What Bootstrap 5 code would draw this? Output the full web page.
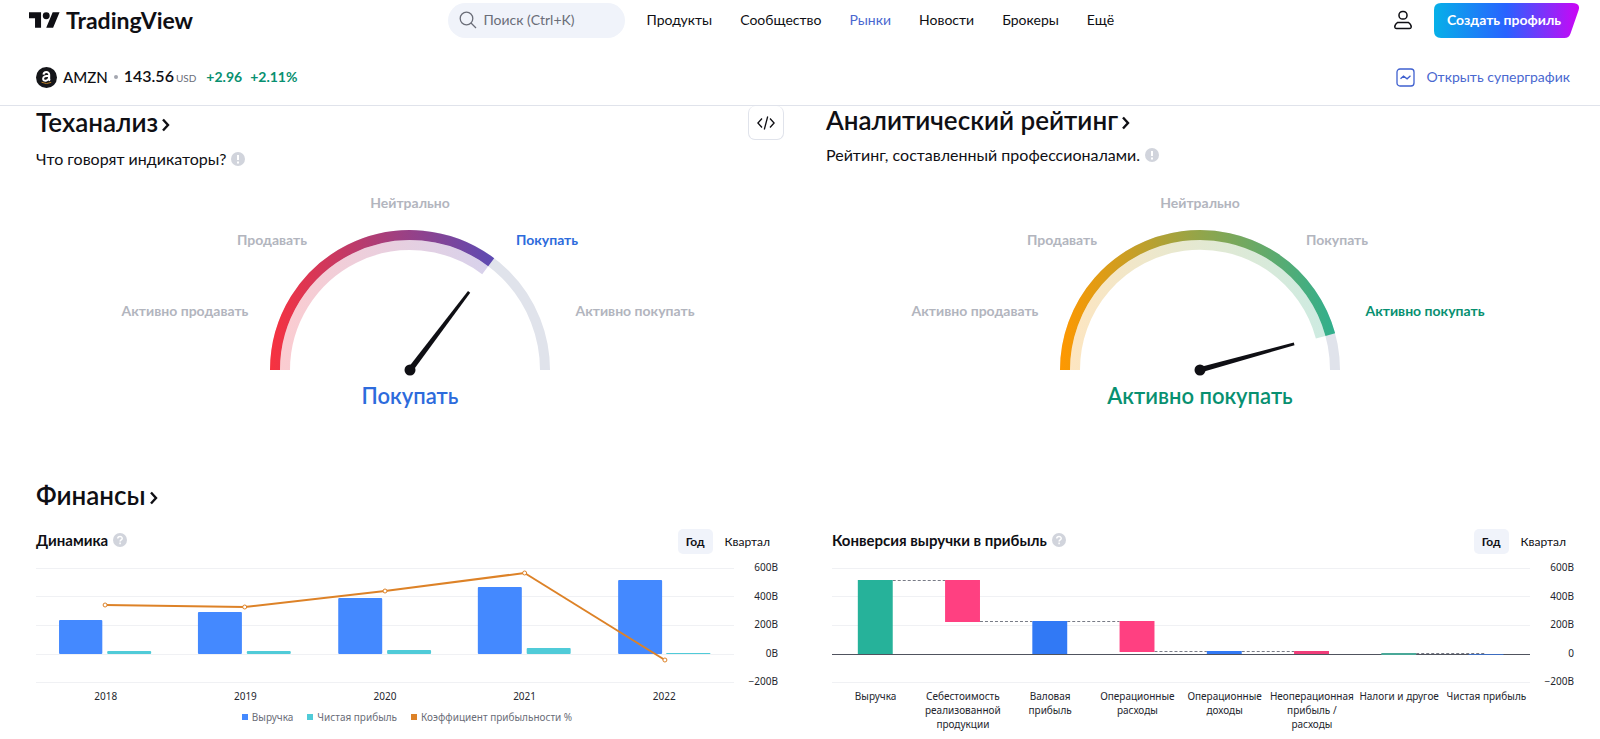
<!DOCTYPE html>
<html lang="ru">
<head>
<meta charset="utf-8">
<meta name="viewport" content="width=device-width, initial-scale=1">
<title>AMZN — TradingView</title>
<link href="https://cdn.jsdelivr.net/npm/bootstrap@5.3.0/dist/css/bootstrap.min.css" rel="stylesheet">
<style>
  :root { --ink: #0f0f14; --muted: #b2b5be; --blue: #2d6bdc; --green: #089070; --pale: #f0f3fa; --link: #4a68d0; }
  body { font-family: "Trebuchet MS", Lato, sans-serif; font-size: 14px; line-height: 20px; color: var(--ink); background: #fff; }
  .page-top { border-bottom: 1px solid #e0e3eb; }
  .bar-main { height: 40px; padding: 0 21px 0 29px; }
  .brand { width: 27%; min-width: 190px; }
  .brand a { gap: 6px; font-size: 23px; font-weight: 700; line-height: 28px; color: var(--ink); }
  .search-box { width: 177px; height: 35px; padding: 0 10px 0 11px; gap: 7px; border-radius: 18px; background: var(--pale); color: #6a6d78; }
  .search-box input { font-size: 14px; color: inherit; outline: 0; min-width: 0; }
  .search-box input::placeholder { color: #6a6d78; opacity: 1; }
  .main-links { gap: 28px; margin-left: 22px; }
  .main-links a { color: var(--ink); }
  .main-links a.active { color: var(--link); }
  .btn-user { width: 20px; height: 20px; margin-right: 21px; }
  .btn-create { width: 145px; height: 35px; padding: 0 18px 0 13px; font-size: 14px; font-weight: 700; line-height: 20px; color: #fff !important; white-space: nowrap; border: 0; }
  .bar-symbol { height: 56px; margin-top: 9px; padding: 0 30px 0 36px; }
  .ticker { gap: 6px; }
  .symbol-name { font-size: 15px; font-weight: 500; }
  .price { font-size: 16px; font-weight: 600; }
  .price-unit { font-size: 10px; font-weight: 400; color: #6a6d78; margin-left: 2px; }
  .delta { font-weight: 700; color: var(--green); gap: 8px; }
  .super-link { color: var(--link); gap: 11px; }
  .content { padding: 0 26px 0 36px; }
  .ratings { display: grid; grid-template-columns: 1fr 1fr; column-gap: 42px; }
  .finance { display: grid; grid-template-columns: 1fr 1fr; column-gap: 54px; }
  .title { font-size: 26px; font-weight: 600; line-height: 32px; margin: 0; }
  .title a { color: inherit; gap: 4px; }
  .title svg { margin-top: 6px; }
  .raised .title { line-height: 28px; }
  .about { font-size: 16px; line-height: 22px; gap: 5px; margin: 8px 0 15px; }
  .raised .about { margin-top: 10px; }
  .btn-embed { width: 36px; height: 34px; border: 1px solid #e0e3eb; border-top: 0; border-radius: 7px; background: #fff; }
  .gauge { height: 230px; }
  .gauge text { font-size: 14px; font-weight: 700; fill: var(--muted); text-anchor: middle; }
  .gauge text.verdict { font-size: 22px; font-weight: 600; }
  .gauge text.buy { fill: var(--blue); }
  .gauge text.strong-buy { fill: var(--green); }
  .finance-head { margin-top: 64px; }
  .chart-head { height: 25px; margin-top: 18px; }
  .chart-title { font-size: 15px; font-weight: 700; line-height: 20px; gap: 5px; margin: 0 0 3px; }
  .period .btn { font-size: 12px; line-height: 15px; padding: 5px 8px; border: 0; border-radius: 5px; color: var(--ink); }
  .period .btn.active { background: var(--pale); font-weight: 700; color: var(--ink); }
  .chart-part { font-family: "Noto Sans", sans-serif; font-size: 10px; line-height: 14px; color: #24262e; }
  .plot { height: 128px; margin-top: 6px; }
  .plot svg { min-width: 0; }
  .axis-y { width: 44px; text-align: right; }
  .axis-x { margin: 1px 44px 0 0; display: grid; grid-auto-flow: column; grid-auto-columns: minmax(0, 1fr); text-align: center; white-space: nowrap; }
  .legend { gap: 14px; margin-top: 7px; color: #6a6d78; }
  .legend span { gap: 4px; }
  .legend i { width: 6px; height: 6px; }
  .key-revenue { background: #4489ff; }
  .key-income { background: #50cbd8; }
  .key-margin { background: #dd8227; }
  .grid-lines line { stroke: #f0f1f4; }
  .margin-line line { stroke: #dd8227; stroke-width: 2; }
  .margin-line circle { fill: #fff; stroke: #dd8227; stroke-width: 1; }
  .links line { stroke: #787b86; stroke-dasharray: 3 2; }
</style>
</head>
<body>

<svg width="0" height="0" class="position-absolute" aria-hidden="true">
  <symbol id="chevron" viewBox="0 0 8 14"><path d="M1 1.500 6 7l-5 5.500" fill="none" stroke="#0f0f14" stroke-width="2.400"/></symbol>
  <symbol id="alert" viewBox="0 0 14 14"><circle cx="7" cy="7" r="7" fill="#d1d4dc"/><path d="M7 3v5M7 9.500v2" stroke="#fff" stroke-width="2"/></symbol>
  <symbol id="help" viewBox="0 0 14 14"><circle cx="7" cy="7" r="7" fill="#d1d4dc"/><path d="M4.800 5.500C4.800 2.800 9.300 2.900 9.200 5.400 9.200 6.900 7.100 6.800 7.100 8.500M7.100 9.600v1.700" fill="none" stroke="#fff" stroke-width="1.500"/></symbol>
</svg>

<header class="page-top">
  <nav class="bar-main d-flex align-items-center" aria-label="Главное меню">
    <div class="brand flex-shrink-0"><a href="#" class="d-inline-flex align-items-center text-decoration-none">
      <svg width="31" height="16" viewBox="0 4 36 18" fill="#0f0f14" aria-hidden="true"><path d="M14 22H7V11H0V4h14zM28 22h-8l7.500-18h8z"/><circle cx="20" cy="8" r="4"/></svg>
      TradingView</a></div>
    <label class="search-box d-flex align-items-center flex-shrink-0">
      <svg width="18" height="18" viewBox="0 0 18 18" fill="none" stroke="#6a6d78" stroke-width="1.300" class="flex-shrink-0" aria-hidden="true"><circle cx="7.500" cy="7.500" r="6.300"/><path d="m12 12 5 5"/></svg>
      <input type="search" class="border-0 bg-transparent p-0 w-100" placeholder="Поиск (Ctrl+K)" aria-label="Поиск">
    </label>
    <div class="main-links d-flex">
      <a href="#" class="text-decoration-none">Продукты</a>
      <a href="#" class="text-decoration-none">Сообщество</a>
      <a href="#" class="text-decoration-none active">Рынки</a>
      <a href="#" class="text-decoration-none">Новости</a>
      <a href="#" class="text-decoration-none">Брокеры</a>
      <a href="#" class="text-decoration-none">Ещё</a>
    </div>
    <button type="button" class="btn btn-user border-0 p-0 ms-auto d-flex" aria-label="Профиль">
      <svg width="20" height="20" viewBox="0 0 20 20" fill="none" stroke="#0f0f14" stroke-width="1.500"><rect x="6" y="1.500" width="8" height="7.500" rx="3.600"/><path d="M4.500 12.500h11c1.800 1.400 3 3 2.700 4.700-.2.900-.7 1.300-1.700 1.300h-13c-1 0-1.500-.4-1.700-1.300-.3-1.700.9-3.300 2.700-4.700z"/></svg>
    </button>
    <button type="button" class="btn btn-create position-relative">
      <svg class="position-absolute top-0 start-0" width="145" height="35" viewBox="0 0 145 35" aria-hidden="true">
        <defs><linearGradient id="cta"><stop stop-color="#06b0e8"/><stop offset=".5" stop-color="#2962ff"/><stop offset="1" stop-color="#cc05f5"/></linearGradient></defs>
        <path d="M7 0h131q9 0 6.500 7.500l-8 23q-1.500 4.500-6 4.500H7q-7 0-7-7V7q0-7 7-7z" fill="url(#cta)"/></svg>
      <span class="position-relative">Создать профиль</span>
    </button>
  </nav>
  <div class="bar-symbol d-flex align-items-center justify-content-between">
    <div class="ticker d-flex align-items-center">
      <svg width="21" height="21" viewBox="0 0 21 21" aria-hidden="true"><circle cx="10.500" cy="10.500" r="10.500" fill="#15161a"/><path d="M7.500 7.600c.2-3.300 5.700-3.500 5.700.1v4.200q0 1 .9 1.600M13 8.800c-3.200 0-5.900.4-5.900 2.900 0 3.100 5.500 2.400 5.900-1" fill="none" stroke="#fff" stroke-width="2"/><path d="M5.500 15.200q5 2.600 9.700.2" fill="none" stroke="#b57a24" stroke-width="1"/></svg>
      <span class="symbol-name">AMZN</span>
      <svg width="4" height="4" aria-hidden="true"><circle cx="2" cy="2" r="2" fill="#a3a6af"/></svg>
      <span class="price">143.56<span class="price-unit">USD</span></span>
      <span class="delta d-flex ms-1"><span>+2.96</span><span>+2.11%</span></span>
    </div>
    <a href="#" class="super-link d-flex align-items-center text-decoration-none">
      <svg width="19" height="19" viewBox="0 0 19 19" fill="none" stroke="#3f60cf" stroke-width="1.300" aria-hidden="true"><rect x="1" y="1" width="17" height="17" rx="3"/><path d="m4.500 10.800 3-2.600 3.600 2.600 3.400-3"/></svg>
      Открыть суперграфик</a>
  </div>
</header>

<main class="content">
  <section class="ratings">
    <div class="d-flex flex-column">
      <div class="d-flex justify-content-between align-items-start">
        <h2 class="title"><a href="#" class="d-flex align-items-center text-decoration-none">Теханализ<svg width="8" height="14"><use href="#chevron"/></svg></a></h2>
        <button type="button" class="btn-embed d-flex align-items-center justify-content-center p-0" aria-label="Код для вставки">
          <svg width="18" height="14" viewBox="0 0 18 14" fill="none" stroke="#0f0f14" stroke-width="1.300"><path d="M5 2.500.9 7 5 11.500M13 2.500 17.100 7 13 11.500M10.700.5 7.300 13.500"/></svg>
        </button>
      </div>
      <p class="about d-flex align-items-center">Что говорят индикаторы?<svg width="14" height="14"><use href="#alert"/></svg></p>
      <svg class="gauge w-100 mt-auto" viewBox="0 0 748 230" role="img" aria-label="Теханализ: Покупать">
        <defs><linearGradient id="g1" gradientUnits="userSpaceOnUse" x1="234" y1="0" x2="514" y2="0"><stop stop-color="#f7323f"/><stop offset="1" stop-color="#3650d0"/></linearGradient></defs>
        <g fill="none" stroke-width="10">
          <path d="M239 185a135 135 0 0 1 270 0" stroke="#e0e3eb"/>
          <path d="M249 185A125 125 0 0 1 449.200 85.200" stroke="#fff"/>
          <path d="M249 185A125 125 0 0 1 449.200 85.200" stroke="url(#g1)" opacity=".25"/>
          <path d="M239 185A135 135 0 0 1 455.200 77.200" stroke="url(#g1)"/>
        </g>
        <path d="m371.800 183.300 60.200-77.300 2.200 1.700-58 79z" fill="#0f0f14"/><circle cx="374" cy="185" r="5.500" fill="#0f0f14"/>
        <text x="374" y="23">Нейтрально</text>
        <text x="236" y="60">Продавать</text>
        <text x="511" y="60" class="buy">Покупать</text>
        <text x="149" y="131">Активно продавать</text>
        <text x="599" y="131">Активно покупать</text>
        <text x="374" y="219" class="verdict buy">Покупать</text>
      </svg>
    </div>
    <div class="d-flex flex-column raised">
      <h2 class="title"><a href="#" class="d-flex align-items-center text-decoration-none">Аналитический рейтинг<svg width="8" height="14"><use href="#chevron"/></svg></a></h2>
      <p class="about d-flex align-items-center">Рейтинг, составленный профессионалами.<svg width="14" height="14"><use href="#alert"/></svg></p>
      <svg class="gauge w-100 mt-auto" viewBox="0 0 748 230" role="img" aria-label="Аналитический рейтинг: Активно покупать">
        <defs><linearGradient id="g2" gradientUnits="userSpaceOnUse" x1="234" y1="0" x2="514" y2="0"><stop stop-color="#ff9800"/><stop offset=".5" stop-color="#92a54a"/><stop offset="1" stop-color="#2db090"/></linearGradient></defs>
        <g fill="none" stroke-width="10">
          <path d="M239 185a135 135 0 0 1 270 0" stroke="#e0e3eb"/>
          <path d="M249 185A125 125 0 0 1 494.700 152.200" stroke="#fff"/>
          <path d="M249 185A125 125 0 0 1 494.700 152.200" stroke="url(#g2)" opacity=".25"/>
          <path d="M239 185A135 135 0 0 1 504.300 149.600" stroke="url(#g2)"/>
        </g>
        <path d="m373.300 182.300 94.500-24.700.7 2.600-93.800 27.400z" fill="#0f0f14"/><circle cx="374" cy="185" r="5.500" fill="#0f0f14"/>
        <text x="374" y="23">Нейтрально</text>
        <text x="236" y="60">Продавать</text>
        <text x="511" y="60">Покупать</text>
        <text x="149" y="131">Активно продавать</text>
        <text x="599" y="131" class="strong-buy">Активно покупать</text>
        <text x="374" y="219" class="verdict strong-buy">Активно покупать</text>
      </svg>
    </div>
  </section>

  <section>
    <h2 class="title finance-head d-flex"><a href="#" class="d-flex align-items-center text-decoration-none">Финансы<svg width="8" height="14"><use href="#chevron"/></svg></a></h2>
    <div class="finance">
      <div>
        <div class="chart-head d-flex align-items-center justify-content-between">
          <h3 class="chart-title d-flex align-items-center">Динамика<svg width="14" height="14"><use href="#help"/></svg></h3>
          <div class="period d-flex gap-1"><button type="button" class="btn active">Год</button><button type="button" class="btn">Квартал</button></div>
        </div>
        <div class="chart-part">
          <div class="plot d-flex">
            <svg class="flex-grow-1 h-100" role="img" aria-label="Динамика по годам">
              <g class="grid-lines"><line x2="100%" y1="8.500" y2="8.500"/><line x2="100%" y1="36.500" y2="36.500"/><line x2="100%" y1="65.500" y2="65.500"/><line x2="100%" y1="94.500" y2="94.500"/><line x2="100%" y1="122.500" y2="122.500"/></g>
              <g fill="#4489ff">
                <rect x="3.300%" y="60" width="6.200%" height="34" rx="1"/><rect x="23.200%" y="52" width="6.300%" height="42" rx="1"/><rect x="43.300%" y="38" width="6.300%" height="56" rx="1"/><rect x="63.300%" y="27" width="6.300%" height="67" rx="1"/><rect x="83.400%" y="20" width="6.300%" height="74" rx="1"/>
              </g>
              <g fill="#50cbd8">
                <rect x="10.200%" y="91" width="6.300%" height="3" rx="1"/><rect x="30.200%" y="91" width="6.300%" height="3" rx="1"/><rect x="50.300%" y="90" width="6.300%" height="4" rx="1"/><rect x="70.300%" y="88" width="6.300%" height="6" rx="1"/><rect x="90.300%" y="93" width="6.300%" height="1"/>
              </g>
              <g class="margin-line">
                <line x1="9.900%" y1="45" x2="29.900%" y2="47"/><line x1="29.900%" y1="47" x2="50%" y2="31"/><line x1="50%" y1="31" x2="70%" y2="13"/><line x1="70%" y1="13" x2="90.100%" y2="100"/>
                <circle cx="9.900%" cy="45" r="2"/><circle cx="29.900%" cy="47" r="2"/><circle cx="50%" cy="31" r="2"/><circle cx="70%" cy="13" r="2"/><circle cx="90.100%" cy="100" r="2"/>
              </g>
            </svg>
            <div class="axis-y d-flex flex-column justify-content-between flex-shrink-0"><span>600B</span><span>400B</span><span>200B</span><span>0B</span><span>−200B</span></div>
          </div>
          <div class="axis-x"><span>2018</span><span>2019</span><span>2020</span><span>2021</span><span>2022</span></div>
          <div class="legend d-flex justify-content-center">
            <span class="d-flex align-items-center"><i class="key-revenue"></i>Выручка</span>
            <span class="d-flex align-items-center"><i class="key-income"></i>Чистая прибыль</span>
            <span class="d-flex align-items-center"><i class="key-margin"></i>Коэффициент прибыльности %</span>
          </div>
        </div>
      </div>
      <div>
        <div class="chart-head d-flex align-items-center justify-content-between">
          <h3 class="chart-title d-flex align-items-center">Конверсия выручки в прибыль<svg width="14" height="14"><use href="#help"/></svg></h3>
          <div class="period d-flex gap-1"><button type="button" class="btn active">Год</button><button type="button" class="btn">Квартал</button></div>
        </div>
        <div class="chart-part">
          <div class="plot d-flex">
            <svg class="flex-grow-1 h-100" role="img" aria-label="Конверсия выручки в прибыль">
              <g class="grid-lines"><line x2="100%" y1="8.500" y2="8.500"/><line x2="100%" y1="36.500" y2="36.500"/><line x2="100%" y1="65.500" y2="65.500"/><line x2="100%" y1="122.500" y2="122.500"/></g>
              <line x2="100%" y1="94.500" y2="94.500" stroke="#50535e"/>
              <g class="links"><line x1="8.700%" x2="16.200%" y1="20.500" y2="20.500"/><line x1="21.200%" x2="28.700%" y1="61.500" y2="61.500"/><line x1="33.700%" x2="41.200%" y1="61.500" y2="61.500"/><line x1="46.200%" x2="53.700%" y1="91.500" y2="91.500"/><line x1="58.700%" x2="66.200%" y1="91.500" y2="91.500"/><line x1="83.700%" x2="93.600%" y1="93.500" y2="93.500"/></g>
              <rect x="3.700%" y="20" width="5%" height="74" fill="#26b29a"/>
              <rect x="16.200%" y="20" width="5%" height="42" fill="#ff4081"/>
              <rect x="28.700%" y="61" width="5%" height="33" fill="#3179f5"/>
              <rect x="41.200%" y="61" width="5%" height="31" fill="#ff4081"/>
              <rect x="53.700%" y="91" width="5%" height="3" fill="#3179f5"/>
              <rect x="66.200%" y="91" width="5%" height="3" fill="#f03c79"/>
              <rect x="78.700%" y="93" width="5%" height="2" fill="#4aa898"/>
              <rect x="91.200%" y="94" width="5%" height="1" fill="#3c6cc0"/>
            </svg>
            <div class="axis-y d-flex flex-column justify-content-between flex-shrink-0"><span>600B</span><span>400B</span><span>200B</span><span>0</span><span>−200B</span></div>
          </div>
          <div class="axis-x"><span>Выручка</span><span>Себестоимость<br>реализованной<br>продукции</span><span>Валовая<br>прибыль</span><span>Операционные<br>расходы</span><span>Операционные<br>доходы</span><span>Неоперационная<br>прибыль /<br>расходы</span><span>Налоги и другое</span><span>Чистая прибыль</span></div>
        </div>
      </div>
    </div>
  </section>
</main>
<script src="https://cdn.jsdelivr.net/npm/bootstrap@5.3.0/dist/js/bootstrap.bundle.min.js"></script>
</body>
</html>
